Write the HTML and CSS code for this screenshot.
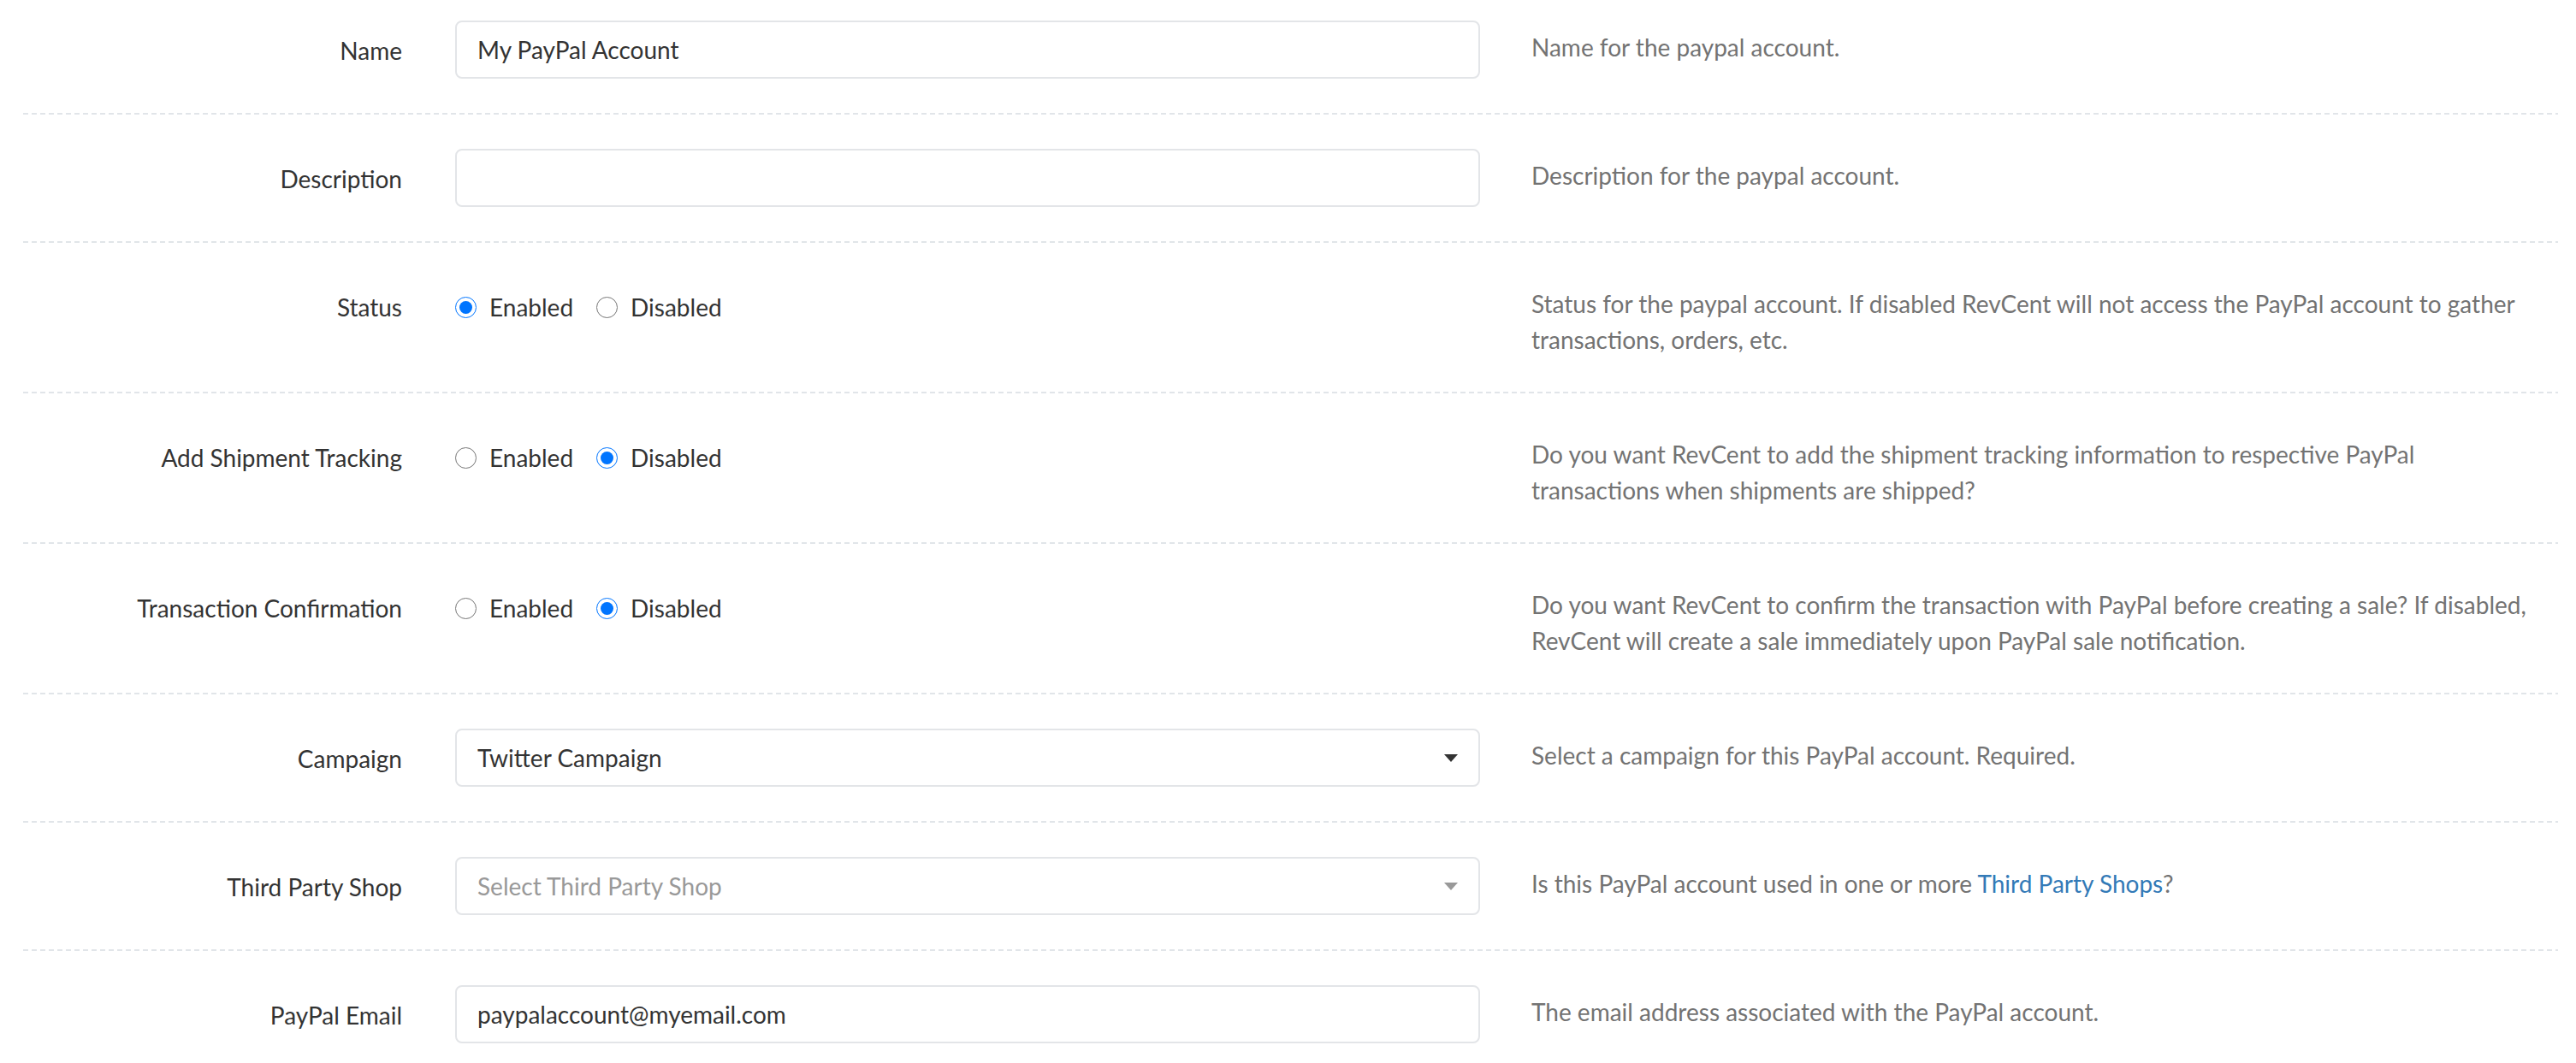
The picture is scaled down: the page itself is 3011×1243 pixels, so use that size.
FILE: index.html
```html
<!DOCTYPE html>
<html lang="en">
<head>
<meta charset="utf-8">
<title>PayPal Account</title>
<link rel="stylesheet" href="styles.css">
</head>
<body>
<main class="settings-form">
  <div class="field-row field-row--first">
    <label class="field-label" for="acct-name">Name</label>
    <div class="field-control"><input id="acct-name" class="text-input" type="text" value="My PayPal Account"></div>
    <p class="field-help">Name for the paypal account.</p>
  </div>

  <div class="field-row">
    <label class="field-label" for="acct-desc">Description</label>
    <div class="field-control"><input id="acct-desc" class="text-input" type="text" value=""></div>
    <p class="field-help">Description for the paypal account.</p>
  </div>

  <div class="field-row">
    <span class="field-label">Status</span>
    <div class="field-control radio-group">
      <label class="radio-option"><input type="radio" name="status" checked><span>Enabled</span></label>
      <label class="radio-option"><input type="radio" name="status"><span>Disabled</span></label>
    </div>
    <p class="field-help">Status for the paypal account. If disabled RevCent will not access the PayPal account to gather transactions, orders, etc.</p>
  </div>

  <div class="field-row">
    <span class="field-label">Add Shipment Tracking</span>
    <div class="field-control radio-group">
      <label class="radio-option"><input type="radio" name="tracking"><span>Enabled</span></label>
      <label class="radio-option"><input type="radio" name="tracking" checked><span>Disabled</span></label>
    </div>
    <p class="field-help">Do you want RevCent to add the shipment tracking information to respective PayPal transactions when shipments are shipped?</p>
  </div>

  <div class="field-row">
    <span class="field-label">Transaction Confirmation</span>
    <div class="field-control radio-group">
      <label class="radio-option"><input type="radio" name="confirm"><span>Enabled</span></label>
      <label class="radio-option"><input type="radio" name="confirm" checked><span>Disabled</span></label>
    </div>
    <p class="field-help">Do you want RevCent to confirm the transaction with PayPal before creating a sale? If disabled, RevCent will create a sale immediately upon PayPal sale notification.</p>
  </div>

  <div class="field-row">
    <span class="field-label">Campaign</span>
    <div class="field-control">
      <div class="select-box">
        <span class="select-value">Twitter Campaign</span>
        <span class="select-caret"></span>
      </div>
    </div>
    <p class="field-help">Select a campaign for this PayPal account. Required.</p>
  </div>

  <div class="field-row">
    <span class="field-label">Third Party Shop</span>
    <div class="field-control">
      <div class="select-box select-box--empty">
        <span class="select-value">Select Third Party Shop</span>
        <span class="select-caret"></span>
      </div>
    </div>
    <p class="field-help">Is this PayPal account used in one or more <a class="help-link" href="#">Third Party Shops</a>?</p>
  </div>

  <div class="field-row field-row--last">
    <label class="field-label" for="acct-email">PayPal Email</label>
    <div class="field-control"><input id="acct-email" class="text-input" type="text" value="paypalaccount@myemail.com"></div>
    <p class="field-help">The email address associated with the PayPal account.</p>
  </div>
</main>
</body>
</html>
```

FILE: styles.css
```css
html, body {
  margin: 0;
  padding: 0;
  background: #ffffff;
}

body {
  font-family: Lato, "Noto Sans", "Liberation Sans", sans-serif;
  font-size: 28px;
  line-height: 42px;
  color: #333333;
  overflow: hidden;
}

.settings-form {
  padding: 0 21px 0 27px;
}

/* one form row: label | control | help, with a dashed rule underneath */
.field-row {
  display: grid;
  grid-template-columns: 475px 1258px 1fr;
  align-items: start;
  padding: 40px 0 42px;
  background-image: linear-gradient(to right, #e1e5e9 6px, transparent 6px);
  background-size: 10px 2px;
  background-repeat: repeat-x;
  background-position: left bottom;
}

.field-row--first {
  padding-top: 24px;
}

.field-row--last {
  background-image: none;
}

.field-label {
  padding: 14px 32px 0 0;
  text-align: right;
  color: #333333;
}

.field-control {
  padding: 0 30px;
}

.field-help {
  margin: 0;
  padding: 11px 12px 0 30px;
  line-height: 41.5px;
  color: #737373;
}

.help-link {
  color: #337ab7;
  text-decoration: none;
}

/* text inputs */
.text-input {
  display: block;
  box-sizing: border-box;
  width: 100%;
  height: 68px;
  margin: 0;
  padding: 0 24px;
  border: 2px solid #e3e5e8;
  border-radius: 8px;
  background: #ffffff;
  font: inherit;
  color: #333333;
  outline: none;
}

/* select-style dropdown */
.select-box {
  box-sizing: border-box;
  height: 68px;
  display: flex;
  align-items: center;
  justify-content: space-between;
  padding: 0 24px;
  border: 2px solid #e3e5e8;
  border-radius: 8px;
  background: #ffffff;
}

.select-value {
  color: #333333;
}

.select-caret {
  width: 0;
  height: 0;
  border-left: 8px solid transparent;
  border-right: 8px solid transparent;
  border-top: 9px solid #333333;
}

.select-box--empty .select-value {
  color: #999999;
}

.select-box--empty .select-caret {
  border-top-color: #999999;
}

/* inline radio choices */
.radio-group {
  display: flex;
  align-items: center;
  gap: 27px;
  padding-top: 14px;
  height: 42px;
}

.radio-option {
  display: inline-flex;
  align-items: center;
  gap: 15px;
  color: #333333;
}

.radio-option input {
  width: 25px;
  height: 25px;
  margin: 0;
}
```
